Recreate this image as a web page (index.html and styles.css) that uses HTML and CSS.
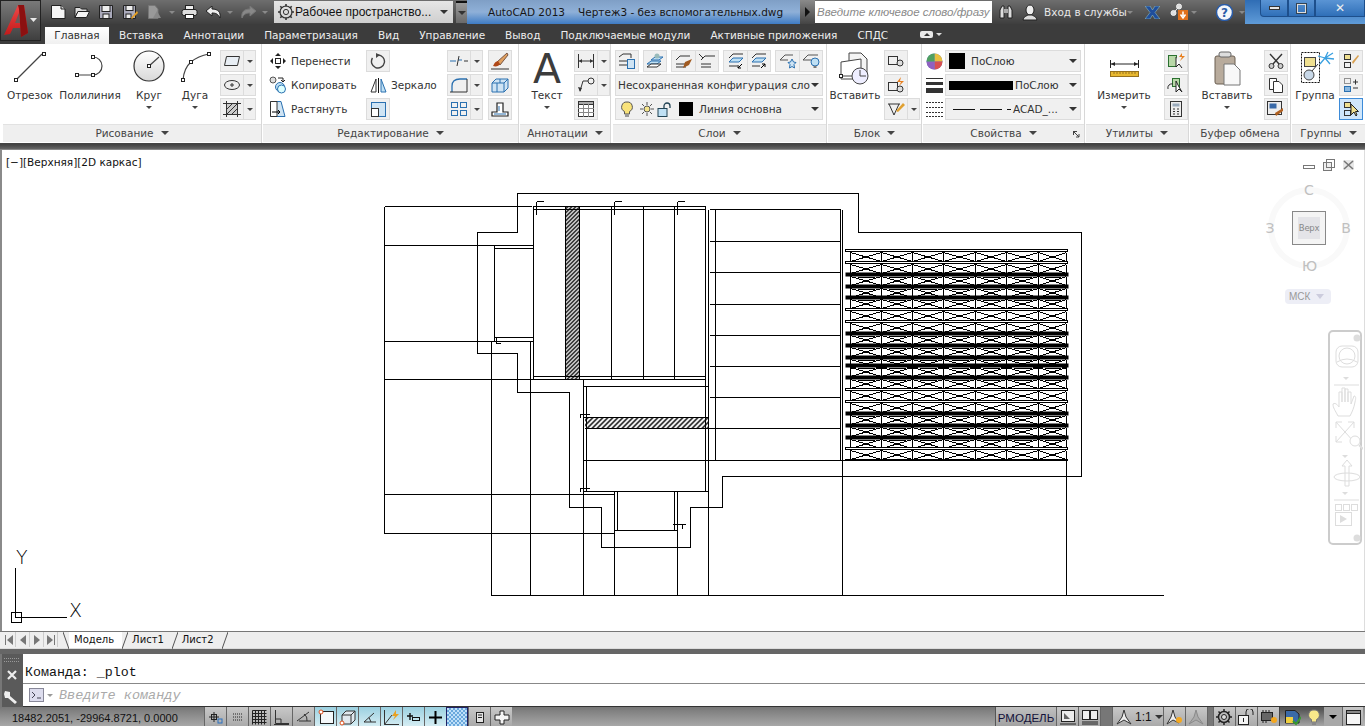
FILE: index.html
```html
<!DOCTYPE html>
<html lang="ru">
<head>
<meta charset="utf-8">
<title>AutoCAD 2013</title>
<link rel="stylesheet" href="styles.css">
</head>
<body>
<div class="app">

<header class="titlebar">
  <div class="qat">
    <span class="q w24"><svg width="16" height="16" viewBox="0 0 16 16"><path d="M1.5 1.5H11L15 5V14.5H1.5Z" fill="#f6f6f6" stroke="#222"/><path d="M11 1.5V5H15" fill="#ccc" stroke="#222"/></svg></span>
    <span class="q w24"><svg width="16" height="16" viewBox="0 0 16 16"><path d="M1 3.5H6L7.5 5H13V7.5H4L1 13.5Z" fill="#ddd" stroke="#222"/><path d="M4 7.5H15.5L12.5 13.5H1Z" fill="#f4f4f4" stroke="#222"/></svg></span>
    <span class="q w24"><svg width="16" height="16" viewBox="0 0 16 16"><path d="M1.5 1.5H14.5V14.5H1.5Z" fill="#aab" stroke="#222"/><rect x="4" y="1.5" width="8" height="6" fill="#eee" stroke="#222"/><rect x="5" y="10" width="6" height="4.5" fill="#eee" stroke="#222"/></svg></span>
    <span class="q w24"><svg width="16" height="16" viewBox="0 0 16 16"><path d="M1.5 1.5H13.5V14.5H1.5Z" fill="#aab" stroke="#222"/><rect x="4" y="1.5" width="7" height="5" fill="#eee" stroke="#222"/><rect x="4" y="10" width="5" height="4.5" fill="#eee" stroke="#222"/><path d="M9 14L15 7L16 9L10 15Z" fill="#e8a020"/></svg></span>
    <span class="q w24"><svg width="16" height="16" viewBox="0 0 16 16"><path d="M2.5 1.5H9L12 5V14.5H2.5Z" fill="#999" stroke="#777"/><path d="M7 14L15 14L11 7Z" fill="#888"/></svg></span>
    <span class="q w12"><i class="tri dim"></i></span>
    <span class="q w22"><svg width="17" height="16" viewBox="0 0 17 16"><rect x="4.5" y="1.5" width="8" height="5" fill="#eee" stroke="#222"/><rect x="1" y="5.5" width="15" height="6" rx="2" fill="#ddd" stroke="#222"/><rect x="4.5" y="10.5" width="8" height="4" fill="#fff" stroke="#222"/></svg></span>
    <span class="q w26"><svg width="16" height="13" viewBox="0 0 16 13"><path d="M1 5L7 0V3C13 3 16 6 15 12C13 8 11 7 7 7V10Z" fill="#eee" stroke="#222"/></svg></span>
    <span class="q w8"><i class="tri dim"></i></span>
    <span class="q w28"><svg width="15" height="13" viewBox="0 0 15 13"><path d="M15 5L9 0V3C3 3 0 6 1 12C3 8 5 7 9 7V10Z" fill="#888" stroke="#777"/></svg></span>
    <span class="q w6"><i class="tri dim"></i></span>
    <div class="workspace">
      <svg width="18" height="18" viewBox="0 0 18 18"><circle cx="9" cy="9" r="6" fill="none" stroke="#333" stroke-width="1.2"/><circle cx="9" cy="9" r="2.6" fill="none" stroke="#333"/><path d="M9 1V3.5M9 14.5V17M1 9H3.5M14.5 9H17M3.3 3.3L5 5M13 13L14.7 14.7M3.3 14.7L5 13M13 5L14.7 3.3" stroke="#333" stroke-width="1.6"/></svg>
      <span class="ws-text">Рабочее пространство...</span>
      <i class="tri dark"></i>
    </div>
    <div class="qat-more"><i class="tri dark"></i></div>
  </div>
  <div class="doc-title"><span>AutoCAD 2013</span><span class="doc-name">Чертеж3 - без вспомогательных.dwg</span></div>
  <div class="nav-arrow"><i class="tri-r"></i></div>
  <div class="search">Введите ключевое слово/фразу</div>
  <div class="tools">
    <svg class="t-bino" width="16" height="16" viewBox="0 0 16 16"><path d="M2 14V6L4 2H6V14ZM10 14V2H12L14 6V14Z" fill="#ddd" stroke="#222"/><rect x="6" y="5" width="4" height="4" fill="#aaa"/></svg>
    <svg class="t-user" width="16" height="17" viewBox="0 0 16 17"><ellipse cx="8" cy="6" rx="4" ry="5" fill="#eee" stroke="#222"/><path d="M1 16C2 12 5 12 6 11H10C11 12 14 12 15 16Z" fill="#ddd" stroke="#222"/></svg>
    <span class="login">Вход в службы</span><i class="tri dim t-gap1"></i>
    <svg class="t-x" width="15" height="13" viewBox="0 0 15 13"><path d="M0 0H5L7.5 4L10 0H15L10 6.500L15 13H10L7.500 9L5 13H0L5 6.500Z" fill="#1f4e9c" stroke="#9cc" stroke-width=".5"/></svg>
    <svg class="t-app" width="19" height="18" viewBox="0 0 19 18"><circle cx="3.500" cy="10" r="2.500" fill="#ddd" stroke="#eee"/><circle cx="9" cy="3.500" r="2.500" fill="#ddd" stroke="#eee"/><path d="M3.500 10L9 3.500" stroke="#eee"/><rect x="8" y="7" width="10" height="10" fill="#e0701c"/><path d="M13 8.500V13M10.500 11.500L13 15L15.500 11.500" stroke="#fff" stroke-width="1.500" fill="none"/></svg>
    <i class="tri dim t-gap2"></i>
    <span class="t-sep"></span>
    <svg class="t-help" width="17" height="17" viewBox="0 0 17 17"><circle cx="8.500" cy="8.500" r="8" fill="#f4f6fa" stroke="#2a5ca8" stroke-width="1.500"/><text x="8.500" y="13" class="help-q">?</text></svg>
    <i class="tri dim t-gap3"></i>
  </div>
  <div class="winctl">
    <div class="wbtn w-min"><span class="w-m"></span></div>
    <div class="wbtn w-max"><span class="w-r"></span></div>
    <div class="wbtn w-close"><span class="w-x">✕</span></div>
  </div>
</header>

<a class="logo" href="#">
  <svg width="41" height="41" viewBox="0 0 41 41"><defs><linearGradient id="lg" x1="0" y1="0" x2="0" y2="1"><stop offset="0" stop-color="#7a7a7a"/><stop offset="1" stop-color="#3e3e3e"/></linearGradient><linearGradient id="lr" x1="0" y1="0" x2="0" y2="1"><stop offset="0" stop-color="#f04848"/><stop offset="1" stop-color="#c01818"/></linearGradient></defs><rect x="0.500" y="0.500" width="40" height="40" fill="url(#lg)" stroke="#222"/><path d="M4 35L18 5H24L28 33L21 37L20.500 28H13L10 34Z" fill="url(#lr)"/><path d="M18 5H24L28 33L21 37L19 9Z" fill="#8c1010"/><path d="M15 23L19 13L20 23Z" fill="#6a5a5a"/><path d="M30 18H37L33.500 22Z" fill="#e8e8e8"/></svg>
</a>

<nav class="tabs">
  <span class="tab active">Главная</span><span class="tab">Вставка</span><span class="tab">Аннотации</span><span class="tab">Параметризация</span><span class="tab">Вид</span><span class="tab">Управление</span><span class="tab">Вывод</span><span class="tab">Подключаемые модули</span><span class="tab">Активные приложения</span><span class="tab">СПДС</span>
  <span class="tab-toggle"><i class="pill"><i class="tri-up"></i></i><i class="tri white"></i></span>
</nav>

<section class="ribbon">

  <div class="panel p-draw">
    <div class="pbody">
      <div class="big w54"><svg width="54" height="36" viewBox="0 0 54 36"><path class="ln" d="M13 30L39 4"/><rect class="h" x="11.500" y="28.500" width="3" height="3"/><rect class="h" x="39.500" y="2.500" width="3" height="3"/></svg><span class="lbl">Отрезок</span></div>
      <div class="big w66"><svg width="66" height="36" viewBox="0 0 66 36"><path class="ln" d="M20 25H36A9 9 0 0 0 36 7"/><rect class="h" x="18.500" y="23.500" width="3" height="3"/><rect class="h" x="34.500" y="23.500" width="3" height="3"/><rect class="h" x="34.500" y="5.500" width="3" height="3"/></svg><span class="lbl">Полилиния</span></div>
      <div class="big w52"><svg width="52" height="36" viewBox="0 0 52 36"><defs><linearGradient id="cg" x1="0" y1="0" x2="0" y2="1"><stop offset="0" stop-color="#fff"/><stop offset="1" stop-color="#d8d8d8"/></linearGradient></defs><circle cx="26" cy="16" r="15" fill="url(#cg)" stroke="#333" stroke-width="1.200"/><path class="ln" d="M26 16L36 7"/><rect class="h" x="24.500" y="14.500" width="3" height="3"/></svg><span class="lbl">Круг</span><i class="tri small"></i></div>
      <div class="big w40"><svg width="40" height="36" viewBox="0 0 40 36"><path class="ln" d="M8 30Q9 18 16 12T34 4"/><rect class="h" x="6.500" y="28.500" width="3" height="3"/><rect class="h" x="14.500" y="10.500" width="3" height="3"/><rect class="h" x="32.500" y="2.500" width="3" height="3"/></svg><span class="lbl">Дуга</span><i class="tri small"></i></div>
      <div class="col ml5">
        <div class="split"><span class="si"><svg width="18" height="14" viewBox="0 0 18 14"><path d="M3.500 2.500H16.500L14.500 11.500H1.500Z" fill="#e8eef4" stroke="#333"/></svg></span><span class="sc"><i class="tri small"></i></span></div>
        <div class="split"><span class="si"><svg width="18" height="14" viewBox="0 0 18 14"><ellipse cx="9" cy="7" rx="7.500" ry="4.500" fill="#eee" stroke="#333"/><path d="M7 7H11M9 5V9" stroke="#333"/></svg></span><span class="sc"><i class="tri small"></i></span></div>
        <div class="split"><span class="si"><svg width="18" height="16" viewBox="0 0 18 16"><rect x="3.500" y="2.500" width="11" height="11" fill="#ccc" stroke="#333"/><path d="M0 2.500H18M0 13.500H18M3.500 0V16M14.500 0V16M4 8L9 3M4 13L14 3M9 13L14 8" stroke="#333" fill="none"/></svg></span><span class="sc"><i class="tri small"></i></span></div>
      </div>
    </div>
    <div class="ptitle">Рисование<i class="tri dark2"></i></div>
  </div>

  <div class="panel p-edit">
    <div class="pbody">
      <div class="col c-text">
        <div class="row"><svg width="18" height="18" viewBox="0 0 18 18"><path d="M9 1L12 4H6ZM9 17L12 14H6ZM1 9L4 6V12ZM17 9L14 6V12Z" fill="#222"/><rect x="6.500" y="6.500" width="5" height="5" fill="none" stroke="#222"/></svg><span>Перенести</span></div>
        <div class="row"><svg width="18" height="18" viewBox="0 0 18 18"><circle cx="4" cy="4" r="3" fill="#ddd" stroke="#555"/><path d="M9 2H14V6M12 4L14 6L16 4" fill="none" stroke="#222"/><circle cx="11" cy="11" r="4.500" fill="#bfe0f4" stroke="#2a70b0"/><circle cx="12.500" cy="13" r="4" fill="#dff" stroke="#2a70b0"/></svg><span>Копировать</span></div>
        <div class="row"><svg width="18" height="18" viewBox="0 0 18 18"><path d="M1.500 1.500H12L16 16.500H1.500" fill="#cfe4f4" stroke="#2a70b0"/><path d="M1.500 1.500V16.500H8V1.500Z" fill="#fff" stroke="#333"/><path d="M3 12H11M9 10L11 12L9 14" stroke="#000" fill="none"/></svg><span>Растянуть</span></div>
      </div>
      <div class="col c-mid">
        <div class="sq"><svg width="16" height="16" viewBox="0 0 16 16"><path d="M8 2A6.500 6.500 0 1 1 2.500 5" fill="none" stroke="#444" stroke-width="1.400"/><path d="M6 0L10 2L6 5Z" fill="#444"/></svg></div>
        <div class="row r-mirror"><svg width="17" height="15" viewBox="0 0 17 15"><path d="M6 1V14H1Z" fill="none" stroke="#333"/><path d="M8.500 0V15" stroke="#111"/><path d="M11 1V14H16Z" fill="#bfe0f4" stroke="#2a70b0"/></svg><span>Зеркало</span></div>
        <div class="sq"><svg width="16" height="16" viewBox="0 0 16 16"><rect x="1.500" y="1.500" width="14" height="14" fill="#cfe4f4" stroke="#2a70b0"/><rect x="1.500" y="7.500" width="7" height="8" fill="#fff" stroke="#333"/></svg></div>
      </div>
      <div class="col c-split">
        <div class="split"><span class="si"><svg width="18" height="12" viewBox="0 0 18 12"><path d="M0 6H6M8 5H12" stroke="#2a70b0" stroke-width="1.200"/><path d="M14 6H18" stroke="#333"/><path d="M9 1L7 11" stroke="#333" /></svg></span><span class="sc"><i class="tri small"></i></span></div>
        <div class="split"><span class="si"><svg width="18" height="16" viewBox="0 0 18 16"><path d="M2 15V9Q2 2 10 2H17" fill="none" stroke="#2a70b0" stroke-width="1.300"/><path d="M0 15H17" stroke="#333"/><path d="M17 2V15" stroke="#333"/></svg></span><span class="sc"><i class="tri small"></i></span></div>
        <div class="split"><span class="si"><svg width="18" height="16" viewBox="0 0 18 16"><rect x="1.500" y="1.500" width="6" height="5" fill="none" stroke="#2a70b0"/><rect x="10.500" y="1.500" width="6" height="5" fill="none" stroke="#2a70b0"/><rect x="1.500" y="9.500" width="6" height="5" fill="none" stroke="#2a70b0"/><rect x="10.500" y="9.500" width="6" height="5" fill="none" stroke="#2a70b0"/></svg></span><span class="sc"><i class="tri small"></i></span></div>
      </div>
      <div class="col c-last">
        <div class="sq"><svg width="18" height="18" viewBox="0 0 18 18"><path d="M16 1L6 10L9 13L17 3Z" fill="#e0a060" stroke="#754"/><path d="M7 9C3 10 3 13 2 14C5 15 8 14 9 12Z" fill="#b04818"/><path d="M0 17H18" stroke="#333"/></svg></div>
        <div class="sq"><svg width="18" height="16" viewBox="0 0 18 16"><path d="M1 6L5 2H17V11L13 15H1Z" fill="#cfe4f4" stroke="#2a70b0"/><path d="M1 6H13V15M13 6L17 2M6 6V15M9 2V6" fill="none" stroke="#2a70b0"/></svg></div>
        <div class="sq"><svg width="18" height="16" viewBox="0 0 18 16"><path d="M1 15H17V11H12V2H6V11H1Z" fill="#fff" stroke="#222" stroke-width="1.200"/><path d="M3 13H15M8 5V10" stroke="#2a70b0"/></svg></div>
      </div>
    </div>
    <div class="ptitle">Редактирование<i class="tri dark2"></i></div>
  </div>

  <div class="panel p-annot">
    <div class="pbody">
      <div class="big w54"><svg width="54" height="36" viewBox="0 0 54 36"><text x="27" y="33" class="bigA">A</text></svg><span class="lbl">Текст</span><i class="tri small"></i></div>
      <div class="col">
        <div class="split"><span class="si"><svg width="18" height="14" viewBox="0 0 18 14"><path d="M1.500 0V14M16.500 0V14M2 7H16" stroke="#333" fill="none"/><path d="M2 7L5 5V9ZM16 7L13 5V9Z" fill="#333"/></svg></span><span class="sc"><i class="tri small"></i></span></div>
        <div class="split"><span class="si"><svg width="18" height="16" viewBox="0 0 18 16"><circle cx="14" cy="4" r="3" fill="none" stroke="#333"/><path d="M11 4H6L3 14" fill="none" stroke="#333"/><path d="M3 15L1 10L5 11Z" fill="#333"/></svg></span><span class="sc"><i class="tri small"></i></span></div>
        <div class="sq"><svg width="16" height="16" viewBox="0 0 16 16"><rect x="0.500" y="0.500" width="15" height="15" fill="#fff" stroke="#333"/><rect x="0.500" y="0.500" width="15" height="3" fill="#aaa" stroke="#333"/><path d="M0 7.500H16M0 11.500H16M5.500 3V16M10.500 3V16" stroke="#888"/></svg></div>
      </div>
    </div>
    <div class="ptitle">Аннотации<i class="tri dark2"></i></div>
  </div>

  <div class="panel p-layers">
    <div class="pbody pcol">
      <div class="lrow">
        <div class="sq"><svg width="16" height="16" viewBox="0 0 16 16"><path d="M0 4L4 1H12V5M0 8H8M0 12H8" fill="none" stroke="#333"/><rect x="8.500" y="6.500" width="7" height="9" fill="#cfe4f4" stroke="#2a70b0"/></svg></div>
        <div class="sq ml4"><svg width="18" height="16" viewBox="0 0 18 16"><path d="M5 7L9 4H17L13 7ZM1 11L5 8H15L11 11Z" fill="#bfe0f4" stroke="#2a70b0"/><path d="M1 14L5 11H15L11 14Z" fill="#fff" stroke="#333"/><circle cx="11" cy="3" r="2.500" fill="#9bb"/></svg></div>
        <div class="sq ml4 lj"><svg width="18" height="16" viewBox="0 0 18 16"><path d="M1 7L5 3H15M1 11H11M1 14H11" fill="none" stroke="#333"/><path d="M10 9L17 6L14 12L8 15Z" fill="#a05a20"/></svg></div>
        <div class="sq rj"><svg width="18" height="16" viewBox="0 0 18 16"><path d="M1 1L5 5M3 7L7 3H17M3 11H13M3 14H13" fill="none" stroke="#333"/></svg></div>
        <div class="sq ml4 lj"><svg width="18" height="16" viewBox="0 0 18 16"><path d="M2 9L6 5H16L12 9Z" fill="#bfe0f4" stroke="#2a70b0"/><path d="M2 5L6 1H16M2 13H10" fill="none" stroke="#333"/><path d="M15 11L11 15M11 12V15H14" stroke="#000" fill="none"/></svg></div>
        <div class="sq rj"><svg width="18" height="16" viewBox="0 0 18 16"><path d="M2 9L6 5H16L12 9Z" fill="#bfe0f4" stroke="#2a70b0"/><path d="M2 5L6 1H16M2 13H10" fill="none" stroke="#333"/><path d="M11 15L15 11M12 11H15V14" stroke="#000" fill="none"/></svg></div>
        <div class="sq ml4 lj"><svg width="18" height="16" viewBox="0 0 18 16"><path d="M1 7L6 2H14M1 7H9" fill="none" stroke="#555"/><path d="M13 6L14.500 9L17 9.500L15 11.500L15.500 15L13 13.500L10.500 15L11 11.500L9 9.500L11.500 9Z" fill="#cfe4f4" stroke="#2a70b0"/></svg></div>
        <div class="sq rj"><svg width="18" height="16" viewBox="0 0 18 16"><path d="M1 7L6 2H16M1 7H9" fill="none" stroke="#555"/><circle cx="13" cy="9" r="4" fill="#bfe0f4" stroke="#2a70b0"/><rect x="11.500" y="13" width="3" height="2" fill="#777"/></svg></div>
      </div>
      <div class="dd"><span class="dd-t">Несохраненная конфигурация сло</span><i class="tri dark"></i></div>
      <div class="dd dd-l">
        <svg width="12" height="17" viewBox="0 0 12 17"><path d="M6 1A5 5 0 0 1 8.500 10.500V13H3.500V10.500A5 5 0 0 1 6 1Z" fill="#f8e27a" stroke="#555"/><rect x="4" y="13" width="4" height="3" fill="#999"/></svg>
        <svg class="ml7" width="14" height="14" viewBox="0 0 14 14"><circle cx="7" cy="7" r="3" fill="#f4e48a" stroke="#555"/><path d="M7 0V3M7 11V14M0 7H3M11 7H14M2 2L4 4M10 10L12 12M2 12L4 10M10 4L12 2" stroke="#555"/></svg>
        <svg class="ml3" width="16" height="15" viewBox="0 0 16 15"><rect x="1" y="6.500" width="9" height="8" fill="#bfe0f4" stroke="#245"/><path d="M7 6.500V4A3 3 0 0 1 13 4V6" fill="none" stroke="#245" stroke-width="1.300"/></svg>
        <span class="swatch"></span><span class="dd-t2">Линия основна</span><i class="tri dark"></i>
      </div>
    </div>
    <div class="ptitle">Слои<i class="tri dark2"></i></div>
  </div>

  <div class="panel p-block">
    <div class="pbody">
      <div class="big w54"><svg width="54" height="36" viewBox="0 0 54 36"><path d="M21 3H33L39 9V24H21Z" fill="#f4f4f4" stroke="#444"/><path d="M13 12L33 9V29H13Z" fill="#fff" stroke="#444"/><rect x="11.500" y="24.500" width="3" height="3" fill="#fff" stroke="#222"/><circle cx="32" cy="26" r="8" fill="#eef" stroke="#444"/><path d="M32 20V26H38M15 26H24" fill="none" stroke="#444"/></svg><span class="lbl">Вставить</span></div>
      <div class="col ml2">
        <div class="sq"><svg width="18" height="12" viewBox="0 0 18 12"><rect x="1.500" y="1.500" width="9" height="8" fill="none" stroke="#333"/><circle cx="13" cy="8" r="3" fill="#ddd" stroke="#333"/></svg></div>
        <div class="sq"><svg width="18" height="16" viewBox="0 0 18 16"><rect x="1.500" y="5.500" width="9" height="8" fill="none" stroke="#333"/><circle cx="13" cy="12" r="3" fill="#ddd" stroke="#333"/><path d="M14 0L10 5H14L12 9L17 4H13Z" fill="#e88020"/></svg></div>
        <div class="split"><span class="si"><svg width="18" height="16" viewBox="0 0 18 16"><path d="M1 3H13M2 3L7 14L12 3" fill="none" stroke="#333"/><path d="M9 10L16 2L18 4L11 11Z" fill="#e0a030"/></svg></span><span class="sc"><i class="tri small"></i></span></div>
      </div>
    </div>
    <div class="ptitle">Блок<i class="tri dark2"></i></div>
  </div>

  <div class="panel p-props">
    <div class="pbody pcol pad3">
      <div class="prow"><svg width="17" height="17" viewBox="0 0 17 17"><circle cx="8.500" cy="8.500" r="8" fill="#6a8ac8"/><path d="M8.500 8.500V.5A8 8 0 0 1 16.500 8.500Z" fill="#e8c040"/><path d="M8.500 8.500H16.500A8 8 0 0 1 8.500 16.500Z" fill="#d85050"/><path d="M8.500 8.500V16.500A8 8 0 0 1 .5 8.500Z" fill="#9060c0"/><path d="M8.500 8.500H.5A8 8 0 0 1 8.500 .5Z" fill="#50a060"/></svg><div class="dd pdd"><span class="swatch s2"></span><span class="dd-t2">ПоСлою</span><i class="tri dark"></i></div></div>
      <div class="prow"><svg width="17" height="17" viewBox="0 0 17 17"><rect y="1" width="17" height="1" fill="#333"/><rect y="5" width="17" height="3" fill="#333"/><rect y="11" width="17" height="5" fill="#333"/></svg><div class="dd pdd"><span class="bar"></span><span class="dd-t2 tight">ПоСлою</span><i class="tri dark"></i></div></div>
      <div class="prow"><svg width="17" height="17" viewBox="0 0 17 17"><path d="M0 1.500H17M0 6.500H17M0 11.500H17M0 15.500H17" stroke="#333" stroke-dasharray="2 1"/></svg><div class="dd pdd"><span class="dash"></span><span class="dash"></span><span class="dash d2"></span><span class="dd-t2 t3">ACAD_...</span><i class="tri dark"></i></div></div>
    </div>
    <div class="ptitle">Свойства<i class="tri dark2"></i><svg class="launch" width="7" height="7" viewBox="0 0 7 7"><path d="M0 .5H4M.5 0V4M1 1L6 6M6 3V6H3" stroke="#444" fill="none"/></svg></div>
  </div>

  <div class="panel p-util">
    <div class="pbody">
      <div class="big w76"><svg width="76" height="36" viewBox="0 0 76 36"><path d="M24.500 10V18M52.500 10V18M24 14H53" stroke="#222" fill="none"/><path d="M25 14L29 12V16ZM52 14L48 12V16Z" fill="#222"/><rect x="24.500" y="21.500" width="28" height="5" fill="#e8b830" stroke="#96701c"/><path d="M28 22V24M31 22V24M34 22V24M37 22V24M40 22V24M43 22V24M46 22V24M49 22V24" stroke="#96701c"/></svg><span class="lbl">Измерить</span><i class="tri small"></i></div>
      <div class="col ml2">
        <div class="sq"><svg width="18" height="16" viewBox="0 0 18 16"><rect x="1.500" y="2.500" width="8" height="11" fill="#b8d8a8" stroke="#2a7030"/><path d="M9 4V14L12 11L15 15" fill="#fff" stroke="#222"/><path d="M15 0L12 4H15L13 8L18 3H15Z" fill="#e88020"/></svg></div>
        <div class="sq"><svg width="18" height="16" viewBox="0 0 18 16"><rect x="5.500" y="1.500" width="7" height="8" fill="#b8d8a8" stroke="#2a7030"/><path d="M1 12A4 4 0 0 1 6 7" fill="none" stroke="#333"/><path d="M9 4V15L12 12L15 15L11 8Z" fill="#fff" stroke="#222"/></svg></div>
        <div class="sq"><svg width="12" height="16" viewBox="0 0 12 16"><rect x="0.500" y="0.500" width="11" height="15" fill="#eee" stroke="#333"/><rect x="2.500" y="2.500" width="7" height="3" fill="#9ab"/><path d="M3 8H5M7 8H9M3 10.500H5M7 10.500H9M3 13H5M7 13H9" stroke="#333"/></svg></div>
      </div>
    </div>
    <div class="ptitle">Утилиты<i class="tri dark2"></i></div>
  </div>

  <div class="panel p-clip">
    <div class="pbody">
      <div class="big w74"><svg width="74" height="36" viewBox="0 0 74 36"><rect x="25" y="6" width="20" height="28" rx="2" fill="#b8ab9c" stroke="#6a5e50"/><rect x="29" y="2" width="12" height="5" rx="2" fill="#ddd" stroke="#666"/><path d="M34 14H44L50 20V35H34Z" fill="#f8f8f8" stroke="#777"/></svg><span class="lbl">Вставить</span><i class="tri small"></i></div>
      <div class="col">
        <div class="sq"><svg width="16" height="16" viewBox="0 0 16 16"><path d="M2 1L11 11M14 1L5 11" stroke="#333" stroke-width="1.400"/><circle cx="3.500" cy="13" r="2.500" fill="#ccc" stroke="#333"/><circle cx="12.500" cy="13" r="2.500" fill="#ccc" stroke="#333"/></svg></div>
        <div class="sq"><svg width="16" height="16" viewBox="0 0 16 16"><path d="M1.500 1.500H8.500V12.500H1.500Z" fill="#fff" stroke="#333"/><path d="M5.500 4.500H11L14.500 8V15.500H5.500Z" fill="#fff" stroke="#333"/></svg></div>
        <div class="sq"><svg width="18" height="16" viewBox="0 0 18 16"><rect x="0.500" y="0.500" width="14" height="13" fill="#eee" stroke="#333"/><rect x="2.500" y="2.500" width="7" height="5" fill="#3a6aa8"/><path d="M16 7L8 12L9 15L16 10Z" fill="#b06020"/></svg></div>
      </div>
    </div>
    <div class="ptitle">Буфер обмена</div>
  </div>

  <div class="panel p-group">
    <div class="pbody">
      <div class="big w46"><svg width="46" height="36" viewBox="0 0 46 36"><rect x="9.500" y="2.500" width="18" height="30" fill="none" stroke="#111" stroke-dasharray="2 1"/><rect x="12.500" y="7.500" width="11" height="9" fill="#f0e090" stroke="#444"/><circle cx="17" cy="25" r="5" fill="#c8d8e8" stroke="#444"/><path d="M20 21L26 14" stroke="#333"/><path d="M33 8L36 2M33 8L26 6M33 8L28 14M33 8L38 14M33 8L42 9M33 8L41 3" stroke="#3aa0e0" stroke-width="1.300"/></svg><span class="lbl">Группа</span></div>
      <div class="col ml1">
        <div class="sq"><svg width="16" height="16" viewBox="0 0 16 16"><rect x="1.500" y="1.500" width="6" height="5" fill="#f0e090" stroke="#333"/><rect x="1.500" y="9.500" width="6" height="5" fill="none" stroke="#333"/><path d="M9 9L15 2L16 3L10 11Z" fill="#d8a050"/></svg></div>
        <div class="sq"><svg width="16" height="16" viewBox="0 0 16 16"><rect x="1.500" y="1.500" width="6" height="5" fill="none" stroke="#333" stroke-dasharray="1 1"/><rect x="1.500" y="9.500" width="6" height="5" fill="#8ab8e0" stroke="#2a70b0"/><path d="M10 5H15M12.500 2.500V7.500M10 11H15" stroke="#333"/></svg></div>
        <div class="sq sel"><svg width="16" height="16" viewBox="0 0 16 16"><rect x="1.500" y="1.500" width="6" height="5" fill="#f0e090" stroke="#333"/><rect x="1.500" y="9.500" width="6" height="5" fill="none" stroke="#333"/><path d="M8 3V14L11 11L13 15L14 14L12.500 10.500H15.500Z" fill="#f0e090" stroke="#222"/></svg></div>
      </div>
    </div>
    <div class="ptitle">Группы<i class="tri dark2"></i></div>
  </div>
</section>

<div class="splitter"></div>

<main class="canvas">
  <svg class="drawing" width="1365" height="481" viewBox="0 150 1365 481">
    <defs>
      <pattern id="h1" width="4" height="4" patternUnits="userSpaceOnUse"><path class="hp" d="M0 0H1V1H0ZM3 1H4V2H3ZM2 2H3V3H2ZM1 3H2V4H1Z"/><path class="hp" d="M1 0H2V1H1ZM0 1H1V2H0ZM3 2H4V3H3ZM2 3H3V4H2Z"/></pattern>
      <pattern id="h2" width="5" height="5" patternUnits="userSpaceOnUse"><path class="hp" d="M4 0H5V1H4ZM3 1H4V2H3ZM2 2H3V3H2ZM1 3H2V4H1ZM0 4H1V5H0Z"/><path class="hp" d="M3 0H4V1H3ZM2 1H3V2H2ZM1 2H2V3H1ZM0 3H1V4H0ZM4 4H5V5H4Z"/></pattern>
      <path id="xs" class="dr" d="M850 3V13M881 3V13M912 3V13M943 3V13M975 3V13M1006 3V13M1038 3V13M1066 3V13M850 3L881 12M881 3L850 12M881 3L912 12M912 3L881 12M912 3L943 12M943 3L912 12M943 3L975 12M975 3L943 12M975 3L1006 12M1006 3L975 12M1006 3L1038 12M1038 3L1006 12M1038 3L1066 12M1066 3L1038 12"/>
      <g id="thick"><rect x="845" y="-1" width="223" height="4" fill="#000"/><path d="M857 3H874V4H857ZM888 3H905V4H888ZM919 3H936V4H919ZM951 3H968V4H951ZM982 3H999V4H982ZM1013 3H1031V4H1013ZM1044 3H1060V4H1044Z" class="hp"/><use href="#xs"/></g>
      <g id="dbl"><rect x="845" y="0" width="222" height="2" class="db"/><use href="#xs"/></g>
    </defs>
    <g transform="translate(.5 .5)">
    <rect x="565" y="206" width="14" height="173" fill="url(#h1)" class="nostroke"/>
    <rect x="584" y="417" width="124" height="11" fill="url(#h2)" class="nostroke"/>
    <path class="dr" d="M384 206H531M517 232V193H858V232H1081V476H722V507H690V547H601V507H569V392H517V353H477V232H517
      M384 206V533M384 245H533M384 341H533M384 379H583M384 494H614M384 533H614
      M494 245V340M494 248H533M494 337H533M491 340V595M530 340V595M583 379V595M614 491V595M677 491V595M708 209V595M490 595H1163
      M533 206H705V379H533ZM533 209H705M533 376H705M565 206V379M579 206V379M611 206V379M643 206V379M674 206V379
      M536 201V214M536 201H543M614 201V214M614 201H621M677 201V214M677 201H684M496 337V343H500
      M705 206V386M715 209V460M709 209H840M709 241H840M709 272H840M709 304H840M709 335H840M709 366H840M709 397H840M584 428H840M583 460H1066M840 209V460M842 209V595M1066 460V595
      M583 386H708M586 386V491M583 417H708M705 386V491M583 491H708M614 530H677M617 491V530M674 491V530
      M580 417V414H589M580 491V488H589M672 524H685M682 524V528"/>
    <use href="#dbl" y="249"/><use href="#dbl" y="261"/><use href="#thick" y="273"/><use href="#thick" y="285"/><use href="#thick" y="296"/><use href="#dbl" y="308"/><use href="#dbl" y="320"/><use href="#thick" y="332"/><use href="#thick" y="344"/><use href="#thick" y="356"/><use href="#thick" y="364"/><use href="#thick" y="376"/><use href="#dbl" y="388"/><use href="#dbl" y="400"/><use href="#thick" y="412"/><use href="#thick" y="424"/><use href="#thick" y="436"/><use href="#dbl" y="447"/>
    <rect x="845" y="459" width="222" height="1" class="db"/>
    <path class="dr" d="M15 567V617H66M11 612H21V622H11Z"/>
    </g>
    <text x="16" y="564" class="ucs">Y</text>
    <text x="69" y="617" class="ucs">X</text>
  </svg>

  <div class="vp-label">[−][Верхняя][2D каркас]</div>
  <div class="vp-ctl">
    <svg width="52" height="12" viewBox="0 0 52 12"><rect x="0.500" y="6.500" width="11" height="3" fill="none" stroke="#777"/><rect x="20.500" y="3.500" width="8" height="8" fill="#eee" stroke="#777"/><rect x="23.500" y="0.500" width="8" height="8" fill="none" stroke="#777"/><rect x="40" y="1" width="11" height="10" fill="#e8e8e8"/><path d="M41 2L50 10M50 2L41 10" stroke="#777" stroke-width="1.600"/></svg>
  </div>

  <div class="cube">
    <svg class="cube-ring" width="90" height="90" viewBox="0 0 90 90"><circle cx="45" cy="45" r="38" fill="none" stroke="#f9f9f9" stroke-width="6"/></svg>
    <span class="cd cd-n">С</span><span class="cd cd-w">З</span><span class="cd cd-e">В</span><span class="cd cd-s">Ю</span>
    <div class="cube-face"><span>Верх</span></div>
    <div class="wcs">МСК<i class="wcs-tri"></i></div>
  </div>

  <aside class="navbar">
    <svg width="33" height="212" viewBox="0 0 33 212">
      <circle cx="27" cy="6" r="3.500" fill="#ddd"/>
      <rect x="6" y="14" width="22" height="21" rx="6" fill="none" stroke="#ddd"/><circle cx="17" cy="24" r="8" fill="none" stroke="#ddd"/><path d="M7 30Q17 24 27 30" fill="none" stroke="#ddd"/>
      <path d="M15 43L18 46L15 49Z" fill="#ddd" transform="rotate(90 16 46)"/>
      <path d="M4 53H29" stroke="#ddd"/>
      <path d="M8 84C5 78 3 76 3 72C6 70 8 74 9 75V60H12V70V56H15V70V57H18V70V60H21V72L24 64C26 64 26 66 25 70C24 76 22 80 20 84Z" fill="#fff" stroke="#ddd"/>
      <path d="M6 90L24 110M24 90L6 110M6 90H12M6 90V96M24 90H18M24 90V96M6 110V104M6 110H12" fill="none" stroke="#ddd"/><circle cx="25" cy="109" r="5" fill="#fff" stroke="#ddd"/><path d="M29 113L33 117" stroke="#ddd" stroke-width="2"/>
      <path d="M14 121L17 124L14 127Z" fill="#ddd" transform="rotate(90 15 124)"/>
      <path d="M17 128L22 134H19V154H15V134H12Z" fill="#fff" stroke="#ddd"/><ellipse cx="17" cy="145" rx="13" ry="4" fill="none" stroke="#ddd"/>
      <path d="M14 158L17 161L14 164Z" fill="#ddd" transform="rotate(90 15 161)"/>
      <path d="M4 168H29" stroke="#ddd"/>
      <rect x="5.500" y="172.500" width="6" height="6" fill="none" stroke="#ddd"/><rect x="13.500" y="172.500" width="6" height="6" fill="none" stroke="#ddd"/><rect x="21.500" y="172.500" width="6" height="6" fill="none" stroke="#ddd"/>
      <rect x="5.500" y="180.500" width="16" height="13" fill="none" stroke="#ddd"/><path d="M10 183V191L17 187Z" fill="#ddd"/>
      <circle cx="27" cy="206" r="3.500" fill="#ddd"/>
    </svg>
  </aside>
</main>

<div class="layouts">
  <div class="lt-nav">
    <span class="ln-b"><svg width="10" height="12" viewBox="0 0 10 12"><path d="M1.500 1V11" stroke="#777"/><path d="M9 1V11L3 6Z" fill="#777"/></svg></span>
    <span class="ln-b"><svg width="10" height="12" viewBox="0 0 10 12"><path d="M8 1V11L2 6Z" fill="#777"/></svg></span>
    <span class="ln-b"><svg width="10" height="12" viewBox="0 0 10 12"><path d="M2 1V11L8 6Z" fill="#777"/></svg></span>
    <span class="ln-b"><svg width="10" height="12" viewBox="0 0 10 12"><path d="M8.500 1V11" stroke="#777"/><path d="M1 1V11L7 6Z" fill="#777"/></svg></span>
  </div>
  <div class="lt-tabs">
    <svg width="6" height="17" viewBox="0 0 6 17"><path d="M0 0L6 17" stroke="#555"/></svg>
    <span class="lt lt-on">Модель</span>
    <svg width="6" height="17" viewBox="0 0 6 17"><path d="M0 17L6 0" stroke="#555"/></svg>
    <span class="lt">Лист1</span>
    <svg width="6" height="17" viewBox="0 0 6 17"><path d="M0 17L6 0" stroke="#555"/></svg>
    <span class="lt">Лист2</span>
    <svg width="6" height="17" viewBox="0 0 6 17"><path d="M0 17L6 0" stroke="#555"/></svg>
  </div>
</div>

<div class="splitter2"></div>

<section class="cmd">
  <div class="cmd-side">
    <svg width="21" height="53" viewBox="0 0 21 53"><path d="M2 4.500H18M2 7.500H18" stroke="#999" stroke-dasharray="1 1"/><path d="M6 17L14 25M14 17L6 25" stroke="#eee" stroke-width="2.200"/><path d="M3 37L8 38L8 42L15 48L13 50L6 44L3 44L2 40Z" fill="#eee"/></svg>
  </div>
  <div class="cmd-main">
    <div class="cmd-hist">Команда: _plot</div>
    <div class="cmd-input">
      <span class="prompt"><svg width="15" height="14" viewBox="0 0 15 14"><rect x="0.500" y="0.500" width="14" height="13" fill="#dde" stroke="#889"/><path d="M3 4L6 7L3 10M8 10H12" stroke="#445" fill="none"/></svg></span>
      <i class="tri dim2"></i>
      <span class="cmd-ph">Введите команду</span>
    </div>
  </div>
</section>

<footer class="status">
  <div class="coords">18482.2051, -29964.8721, 0.0000</div>
  <div class="sbgroup">
    <span class="sb"><svg width="17" height="15" viewBox="0 0 17 15"><path d="M2 7H12M7 2V12" stroke="#222"/><rect x="4.500" y="4.500" width="5" height="5" fill="none" stroke="#222"/><rect x="11" y="9" width="4" height="4" fill="none" stroke="#2a70c0"/></svg></span>
    <span class="sb"><svg width="12" height="12" viewBox="0 0 12 12"><path d="M1 3H11M1 6H11M1 9H11" stroke="#222" stroke-dasharray="1 1"/></svg></span>
    <span class="sb"><svg width="15" height="15" viewBox="0 0 15 15"><path d="M.5 .5H14.500M.5 3.500H14.500M.5 6.500H14.500M.5 9.500H14.500M.5 12.500H14.500M.5 .5V14.500M3.500 .5V14.500M6.500 .5V14.500M9.500 .5V14.500M12.500 .5V14.500" stroke="#222"/></svg></span>
    <span class="sb"><svg width="16" height="16" viewBox="0 0 16 16"><path d="M1.500 1V14.500H15" fill="none" stroke="#333"/><path d="M0 15.500H15" stroke="#333"/><path d="M1.500 10H7V14" fill="none" stroke="#333"/></svg></span>
    <span class="sb"><svg width="16" height="14" viewBox="0 0 16 14"><path d="M1 11L13 2M3 11H15" stroke="#333" fill="none"/><path d="M8 4A7 7 0 0 1 11 11" stroke="#333" fill="none"/></svg></span>
    <span class="sb on"><svg width="16" height="16" viewBox="0 0 16 16"><rect x="2.500" y="2.500" width="13" height="12" fill="#f4f8fa" stroke="#222"/><circle cx="3" cy="3" r="2" fill="#fff" stroke="#e0501c"/></svg></span>
    <span class="sb on"><svg width="17" height="17" viewBox="0 0 17 17"><path d="M3 6L7 2H16V11L12 15H3Z" fill="#e0e8ee" stroke="#333"/><path d="M3 6H12V15M12 6L16 2" fill="none" stroke="#333"/><circle cx="3" cy="14" r="2" fill="#fff" stroke="#e0501c"/></svg></span>
    <span class="sb on"><svg width="14" height="12" viewBox="0 0 14 12"><path d="M1 11L11 2M1 11H13M6 6.500L8 11" stroke="#333" fill="none"/></svg></span>
    <span class="sb on"><svg width="17" height="17" viewBox="0 0 17 17"><path d="M1.500 1V15.500H16M1.500 15.500L9 6" stroke="#333" fill="none"/><path d="M13 1L9 7H12L10 11L16 5H13Z" fill="#e8a020"/></svg></span>
    <span class="sb on"><svg width="13" height="9" viewBox="0 0 13 9"><path d="M0 3H6M3 0V7" stroke="#111" stroke-width="1.400"/><rect x="5.500" y="4.500" width="7" height="3" fill="none" stroke="#111"/></svg></span>
    <span class="sb on"><svg width="13" height="13" viewBox="0 0 13 13"><path d="M0 6.500H13M6.500 0V13" stroke="#000" stroke-width="2"/></svg></span>
    <span class="sb checker"></span>
    <span class="sb"><svg width="10" height="12" viewBox="0 0 10 12"><rect x="1.500" y="1.500" width="7" height="10" fill="#e4e4e4" stroke="#222"/><path d="M3 4H7M3 6.500H7" stroke="#222"/></svg></span>
    <span class="sb"><svg width="16" height="15" viewBox="0 0 16 15"><path d="M6 1H10V5H15V10H10V14H6V10H1V5H6Z" fill="#f4f4f4" stroke="#222"/></svg></span>
  </div>
  <div class="sb-fill"></div>
  <div class="rm">РМОДЕЛЬ</div>
  <span class="sb b2"><svg width="16" height="15" viewBox="0 0 16 15"><rect x="1.500" y="0.500" width="13" height="11" fill="#eee" stroke="#222"/><path d="M4 9V3L10 9Z" fill="#666"/><path d="M0 14H16" stroke="#222"/></svg></span>
  <span class="sb b2"><svg width="16" height="15" viewBox="0 0 16 15"><rect x="0.500" y="0.500" width="7" height="9" fill="#eee" stroke="#222"/><rect x="8.500" y="0.500" width="7" height="9" fill="#eee" stroke="#222"/><path d="M0 12H16M0 14H16" stroke="#222"/></svg></span>
  <span class="sb-gap"></span>
  <div class="scale"><svg width="16" height="17" viewBox="0 0 16 17"><path d="M8 1L10 8L15 15L8 11L1 15L6 8Z" fill="#eee" stroke="#333"/></svg><span>1:1</span><i class="tri dark"></i></div>
  <span class="sb b2"><svg width="17" height="17" viewBox="0 0 17 17"><path d="M7 1L9 8L13 14L7 11L1 15L5 8Z" fill="#eee" stroke="#333"/><circle cx="13" cy="11" r="3" fill="#f4a820"/></svg></span>
  <span class="sb b2"><svg width="17" height="17" viewBox="0 0 17 17"><path d="M8 1L10 8L15 15L8 11L1 15L6 8Z" fill="#aaa" stroke="#8a8a8a"/></svg></span>
  <span class="sb-gap g2"></span>
  <span class="sb b2"><svg width="17" height="17" viewBox="0 0 17 17"><circle cx="8" cy="8" r="5.500" fill="none" stroke="#222" stroke-width="1.500"/><circle cx="8" cy="8" r="2.500" fill="#ddd" stroke="#222"/><path d="M8 0V3M8 13V16M0 8H3M13 8H16M2.500 2.500L4.500 4.500M11.500 11.500L13.500 13.500M2.500 13.500L4.500 11.500M11.500 4.500L13.500 2.500" stroke="#222" stroke-width="1.500"/></svg></span>
  <span class="sb b2"><svg width="17" height="16" viewBox="0 0 17 16"><rect x="0.500" y="6.500" width="10" height="9" fill="#f4f4f4" stroke="#222"/><path d="M8 6V3A3 3 0 0 1 15 3V6" fill="none" stroke="#222"/><path d="M5.500 9V13" stroke="#222"/></svg></span>
  <span class="sb b2"><svg width="18" height="16" viewBox="0 0 18 16"><rect x="1.500" y="3.500" width="11" height="8" fill="#666" stroke="#222"/><path d="M3 1V3M6 1V3M9 1V3M3 12V14M6 12V14" stroke="#222"/><circle cx="14" cy="11" r="3" fill="#f4a820"/></svg></span>
  <div class="isolate">
    <svg width="17" height="17" viewBox="0 0 17 17"><path d="M1.500 1.500H11L15 5V14H1.500Z" fill="#3a6aa8" stroke="#222"/><path d="M2 8H9V14H2Z" fill="#f0d040"/><path d="M9 12L12 15L17 8" stroke="#3a9a30" stroke-width="2" fill="none"/></svg>
    <svg width="12" height="17" viewBox="0 0 12 17"><path d="M6 1A5 5 0 0 1 8.500 10.500V13H3.500V10.500A5 5 0 0 1 6 1Z" fill="#f8e88a" stroke="#777"/><rect x="4" y="13" width="4" height="3" fill="#888"/></svg>
  </div>
  <span class="sb-caret"><i class="tri black"></i></span>
  <span class="sb b3"><svg width="15" height="15" viewBox="0 0 15 15"><rect x="0.500" y="0.500" width="14" height="14" fill="#f6f6f6" stroke="#222"/><rect x="0.500" y="0.500" width="14" height="3" fill="#888" stroke="#222"/></svg></span>
</footer>

</div>
</body>
</html>
```

FILE: styles.css
```css
* { box-sizing: border-box; }
html, body { margin: 0; padding: 0; height: 100%; overflow: hidden; background: #fff; }
body { font-family: "DejaVu Sans", sans-serif; font-size: 10.5px; color: #333; }
i { font-style: normal; }
svg { display: block; flex: none; }
.app { position: relative; width: 1365px; height: 726px; display: flex; flex-direction: column; overflow: hidden; }

/* generic carets */
.tri { display: inline-block; width: 0; height: 0; border-left: 4px solid transparent; border-right: 4px solid transparent; border-top: 4px solid #333; flex: none; }
.tri.dim { border-left-width: 3px; border-right-width: 3px; border-top: 3px solid #8a8a8a; }
.tri.dark { border-top-color: #333; }
.tri.small { border-left-width: 3px; border-right-width: 3px; border-top: 3px solid #444; }
.tri.dark2 { border-top-color: #444; margin-left: 7px; }
.tri.white { border-left-width: 3px; border-right-width: 3px; border-top: 3px solid #ddd; margin-left: 3px; }
.tri.dim2 { border-left-width: 3px; border-right-width: 3px; border-top: 3px solid #999; margin: 0 6px 0 3px; }
.tri.black { border-top-color: #000; }
.tri-r { display: block; width: 0; height: 0; border-top: 5px solid transparent; border-bottom: 5px solid transparent; border-left: 5px solid #111; }

/* title bar */
.titlebar { display: flex; height: 24px; flex: none; background: linear-gradient(#6e6e6e, #3e3e3e); }
.qat { display: flex; align-items: center; width: 467px; padding-left: 46px; flex: none; height: 24px; }
.q { display: flex; align-items: center; justify-content: center; height: 24px; flex: none; }
.w24 { width: 24px; } .w12 { width: 12px; } .w22 { width: 22px; } .w26 { width: 26px; } .w8 { width: 8px; } .w28 { width: 28px; } .w6 { width: 6px; }
.workspace { display: flex; align-items: center; width: 179px; height: 22px; margin-left: 6px; padding: 0 5px 0 3px; background: linear-gradient(#e6e6e6, #cfcfcf); color: #111; }
.ws-text { flex: 1; margin-left: 0; white-space: nowrap; font: 12px "Liberation Sans", sans-serif; }
.qat-more { width: 11px; height: 22px; margin-left: 3px; display: flex; align-items: center; justify-content: center; background: linear-gradient(#9a9a9a, #6a6a6a); border-top: 2px solid #111; }
.doc-title { width: 333px; flex: none; display: flex; align-items: center; padding-left: 21px; height: 24px; color: #161616; white-space: nowrap; background: linear-gradient(#7f9fc6, #8fb0d8 50%, #3f7cc4); }
.doc-name { margin-left: 13px; }
.nav-arrow { width: 15px; display: flex; align-items: center; justify-content: center; background: linear-gradient(#8a8a8a, #444); }
.search { width: 177px; height: 22px; margin-top: 1px; background: #fff; color: #8a8a8a; font: italic 11.5px/22px "Liberation Sans", sans-serif; padding-left: 2px; white-space: nowrap; }
.tools { width: 253px; flex: none; display: flex; align-items: center; padding-left: 6px; }
.t-user { margin-left: 8px; }
.login { margin-left: 6px; width: 80px; color: #e8e8e8; white-space: nowrap; }
.t-gap1 { margin-left: 3px; }
.t-x { margin-left: 12px; }
.t-app { margin-left: 10px; }
.t-gap2 { margin-left: 2px; }
.t-sep { width: 1px; height: 16px; background: #666; margin: 0 9px 0 10px; }
.t-gap3 { margin-left: 6px; }
.help-q { font: bold 12px "DejaVu Sans", sans-serif; fill: #2a5ca8; text-anchor: middle; }
.winctl { flex: 1; display: flex; padding-left: 15px; background: linear-gradient(#2f6db5, #5f9bd8); }
.wbtn { height: 17px; border: 1px solid #1d4f8c; border-top: 0; display: flex; align-items: center; justify-content: center; background: linear-gradient(#5a94d4, #2f6fb8); }
.w-min { width: 28px; border-bottom-left-radius: 4px; }
.w-max { width: 27px; }
.w-close { flex: 1; }
.w-m { display: block; width: 11px; height: 4px; background: #e6e6e6; border: 1px solid #333; }
.w-r { display: block; width: 9px; height: 9px; border: 1px solid #ddd; outline: 1px solid #345; }
.w-x { color: #eee; font-size: 12px; font-weight: bold; line-height: 1; }

/* logo */
.logo { position: absolute; left: 0; top: 0; width: 41px; height: 41px; display: block; z-index: 3; }

/* ribbon tabs */
.tabs { display: flex; height: 20px; flex: none; background: #3c3c3c; padding-left: 45px; color: #eee; position: relative; }
.tab { display: block; padding: 0 10px; line-height: 22px; white-space: nowrap; }
.tab.active { background: linear-gradient(#fff, #f0f0f0); color: #333; padding: 0; margin-top: 3px; line-height: 17px; width: 64px; text-align: center; }
.tab-toggle { display: flex; align-items: center; margin-left: 22px; }
.pill { display: flex; align-items: center; justify-content: center; width: 13px; height: 7px; background: #e8e8e8; border-radius: 2px; }
.tri-up { display: block; width: 0; height: 0; border-left: 3px solid transparent; border-right: 3px solid transparent; border-bottom: 3px solid #333; }

/* ribbon */
.ribbon { display: flex; height: 99px; flex: none; background: #fff; padding-left: 3px; }
.panel { display: flex; flex-direction: column; flex: none; margin-right: 1px; border-right: 1px solid #d8d8d8; }
.p-draw { width: 259px; }
.p-edit { width: 256px; }
.p-annot { width: 91px; margin-right: 2px; }
.p-layers { width: 214px; }
.p-block { width: 94px; }
.p-props { width: 162px; }
.p-util { width: 103px; }
.p-clip { width: 101px; }
.p-group { flex: 1; border-right: 0; margin-right: 0; }
.pbody { height: 80px; display: flex; padding-top: 6px; flex: none; }
.pcol { flex-direction: column; padding-left: 2px; gap: 2px; }
.pad3 { padding-left: 3px; }
.ptitle { height: 18px; flex: none; padding-bottom: 2px; background: #efefef; border-top: 1px solid #e2e2e2; display: flex; align-items: center; justify-content: center; color: #444; position: relative; white-space: nowrap; }
.launch { position: absolute; right: 4px; top: 6px; }
.col { display: flex; flex-direction: column; gap: 2px; flex: none; }
.ml5 { margin-left: 5px; } .ml4 { margin-left: 4px; } .ml7 { margin-left: 7px; } .ml3 { margin-left: 3px; } .ml2 { margin-left: 2px; } .ml1 { margin-left: 1px; }
.big { display: flex; flex-direction: column; align-items: center; flex: none; }
.big svg { height: 36px; }
.w54 { width: 54px; } .w66 { width: 66px; } .w52 { width: 52px; } .w40 { width: 40px; } .w76 { width: 76px; } .w74 { width: 74px; } .w46 { width: 46px; }
.lbl { margin-top: 1px; line-height: 16px; white-space: nowrap; color: #333; }
.big .tri.small { margin-top: 3px; }
.bigA { font: 41px "DejaVu Sans", sans-serif; fill: #3c3c3c; text-anchor: middle; }
.ln { fill: none; stroke: #444; stroke-width: 1.200; }
.h { fill: #fff; stroke: #222; stroke-width: 1; }
.sq, .split { height: 22px; background: #f0f0f0; border: 1px solid #dcdcdc; display: flex; align-items: center; justify-content: center; flex: none; }
.sq { width: 24px; }
.split { width: 36px; }
.si { width: 23px; height: 100%; display: flex; align-items: center; justify-content: center; border-right: 1px solid #dcdcdc; }
.sc { flex: 1; display: flex; align-items: center; justify-content: center; }
.sq.lj { border-right: 0; }
.sq.sel { background: #cfe6fb; border-color: #3d8bd8; }
.c-text { width: 103px; padding-left: 6px; }
.row { display: flex; align-items: center; height: 22px; white-space: nowrap; }
.row span { margin-left: 4px; }
.c-mid { width: 81px; align-items: flex-start; }
.r-mirror { padding-left: 4px; }
.c-split { width: 41px; }
.c-last { width: 24px; }
.lrow { display: flex; height: 22px; }
.dd { height: 22px; width: 208px; background: #f0f0f0; border: 1px solid #dcdcdc; display: flex; align-items: center; padding: 0 3px 0 2px; color: #333; white-space: nowrap; }
.dd .tri { margin-left: auto; flex: none; }
.dd-t { flex: 1; }
.dd-l { padding-left: 5px; }
.swatch { display: block; width: 14px; height: 14px; background: #000; margin-left: 6px; flex: none; }
.dd-t2 { margin-left: 6px; }
.prow { display: flex; align-items: center; gap: 2px; height: 22px; }
.pdd { width: 136px; }
.s2 { width: 16px; height: 16px; margin-left: 1px; }
.bar { display: block; width: 64px; height: 9px; background: #000; margin-left: 1px; flex: none; }
.tight { margin-left: 2px; width: 44px; overflow: hidden; }
.dash { display: block; width: 22px; height: 1px; background: #111; margin-left: 5px; flex: none; }
.d2 { width: 4px; }
.t3 { margin-left: 2px; }

.splitter { height: 7px; flex: none; background: linear-gradient(#444 30%, #666); border-bottom: 1px solid #888; }

/* canvas */
.canvas { position: relative; height: 481px; flex: none; background: #fff; border-left: 2px solid #8a8a8a; border-right: 1px solid #ddd; overflow: hidden; }
.drawing { position: absolute; left: -2px; top: 0; }
.dr { fill: none; stroke: #000; stroke-width: 1; shape-rendering: crispEdges; }
.db { fill: #fff; stroke: #000; stroke-width: 1; shape-rendering: crispEdges; }
.hp { fill: #000; shape-rendering: crispEdges; }
.nostroke { stroke: none; shape-rendering: crispEdges; }
.ucs { font: 200 19px "DejaVu Sans", sans-serif; fill: #000; }
.vp-label { position: absolute; left: 4px; top: 6px; color: #111; white-space: nowrap; }
.vp-ctl { position: absolute; left: 1301px; top: 9px; }
.cube { position: absolute; left: 1262px; top: 33px; width: 90px; height: 125px; }
.cube-ring { position: absolute; left: 0; top: 0; }
.cd { position: absolute; color: #c0c0c0; font-size: 14px; line-height: 14px; width: 14px; text-align: center; }
.cd-n { left: 38px; top: 0; } .cd-s { left: 38px; top: 76px; } .cd-w { left: -1px; top: 38px; } .cd-e { left: 75px; top: 38px; }
.cube-face { position: absolute; left: 28px; top: 28px; width: 34px; height: 34px; border: 1px solid #888; background: #f4f4f4; display: flex; align-items: center; justify-content: center; }
.cube-face span { display: flex; align-items: center; justify-content: center; width: 22px; height: 22px; background: #e4e4e8; color: #888; font-size: 8.5px; letter-spacing: -.3px; }
.wcs { position: absolute; left: 21px; top: 106px; width: 46px; height: 15px; background: #edeef6; border-radius: 4px; display: flex; align-items: center; padding-left: 4px; color: #999; font: 10px "Liberation Sans", sans-serif; }
.wcs-tri { display: block; width: 0; height: 0; margin-left: 6px; border-left: 4px solid transparent; border-right: 4px solid transparent; border-top: 5px solid #ccd; }
.navbar { position: absolute; left: 1326px; top: 180px; width: 34px; height: 215px; border: 2px solid #ccc; border-radius: 5px; background: #fff; }

/* layout tabs */
.layouts { display: flex; height: 18px; flex: none; background: #eeeeee; border-top: 1px solid #777; border-bottom: 1px solid #ddd; }
.lt-nav { display: flex; padding-left: 2px; width: 63px; flex: none; }
.ln-b { width: 14px; height: 15px; display: flex; align-items: center; justify-content: center; border-right: 1px solid #ccc; }
.lt-tabs { display: flex; align-items: flex-start; }
.lt { padding: 0 8px 0 4px; color: #111; font: 10px/16px "DejaVu Sans", sans-serif; white-space: nowrap; }
.lt-on { background: #fff; padding: 0 8px 0 5px; }
.splitter2 { height: 5px; flex: none; background: #666; }

/* command line */
.cmd { display: flex; height: 53px; flex: none; background: #fff; }
.cmd-side { width: 23px; flex: none; background: #5a5a5a; border-left: 2px solid #777; }
.cmd-main { flex: 1; display: flex; flex-direction: column; }
.cmd-hist { height: 30px; padding: 10px 0 0 2px; border-bottom: 1px solid #888; font: 13.3px/18px "Liberation Mono", monospace; color: #111; }
.cmd-input { flex: 1; display: flex; align-items: center; padding-left: 6px; border-bottom: 1px solid #333; }
.cmd-ph { font: italic 13.5px "Liberation Mono", monospace; color: #aaa; }

/* status bar */
.status { display: flex; height: 20px; flex: none; background: linear-gradient(#8a8a8a, #b8b8b8); align-items: stretch; }
.coords { width: 204px; flex: none; padding-left: 12px; color: #111; font: 11px/22px "Liberation Sans", sans-serif; white-space: nowrap; background: linear-gradient(#777, #aaa); }
.sbgroup { display: flex; }
.sb { width: 22px; flex: none; display: flex; align-items: center; justify-content: center; border-left: 1px solid #666; background: linear-gradient(#c8c8c8, #a8a8a8); }
.sb.on { background: linear-gradient(#9bd0e0, #d8eef4); }
.sb.checker { background-color: #bfe0f8; background-image: linear-gradient(45deg, #6aa8dc 25%, transparent 25%, transparent 75%, #6aa8dc 75%), linear-gradient(45deg, #6aa8dc 25%, transparent 25%, transparent 75%, #6aa8dc 75%); background-size: 4px 4px; background-position: 0 0, 2px 2px; border: 1px solid #226; }
.sb-fill { flex: 1; background: linear-gradient(#777, #aaa); }
.rm { width: 61px; flex: none; text-align: center; border-left: 1px solid #555; color: #12123a; font: 11.5px/22px "Liberation Sans", sans-serif; background: linear-gradient(#c0c0c0, #a0a0a0); }
.b2 { width: 22px; }
.b3 { width: 21px; margin-right: 2px; }
.sb-gap { width: 12px; flex: none; border-left: 1px solid #666; background: #777; }
.g2 { width: 6px; }
.scale { width: 51px; flex: none; display: flex; align-items: center; gap: 3px; padding-left: 3px; border-left: 1px solid #666; background: linear-gradient(#c8c8c8, #a8a8a8); color: #111; font: 12px "Liberation Sans", sans-serif; }
.isolate { width: 45px; flex: none; display: flex; align-items: center; justify-content: space-around; background: linear-gradient(#555 10%, #aaa); border-left: 1px solid #444; }
.sb-caret { width: 18px; flex: none; display: flex; align-items: center; justify-content: center; background: #a8a8a8; }
```
